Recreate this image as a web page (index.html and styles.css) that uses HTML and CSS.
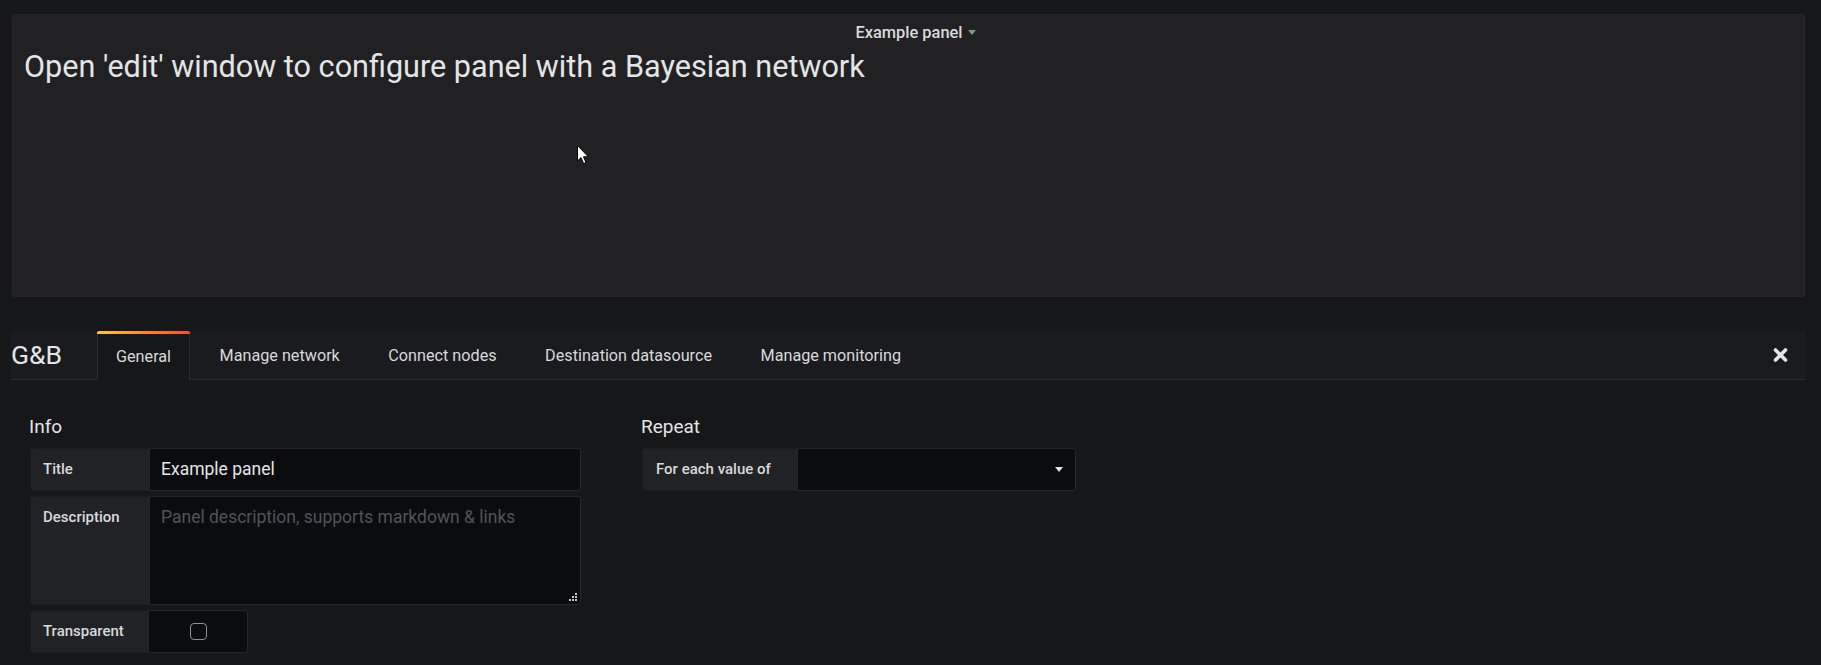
FILE: index.html
```html
<!DOCTYPE html>
<html lang="en">
<head>
<meta charset="utf-8">
<title>G&amp;B panel editor</title>
<link rel="stylesheet" href="styles.css">
</head>
<body>
<section class="panel">
  <header class="panel-header">
    <span class="panel-title">Example panel</span>
    <span class="panel-caret"></span>
  </header>
  <div class="panel-body">
    <p class="panel-text">Open 'edit' window to configure panel with a Bayesian network</p>
  </div>
</section>

<nav class="edit-tabs">
  <span class="brand">G&amp;B</span>
  <ul class="tab-list">
    <li class="tab tab-active">General</li>
    <li class="tab">Manage network</li>
    <li class="tab">Connect nodes</li>
    <li class="tab">Destination datasource</li>
    <li class="tab">Manage monitoring</li>
  </ul>
  <span class="tab-close">
    <svg width="15" height="14" viewBox="0 0 15 14"><path d="M2.5 2 L12.5 12 M12.5 2 L2.5 12" stroke="#e4e5e6" stroke-width="3.6" stroke-linecap="round"/></svg>
  </span>
</nav>

<main class="edit-content">
  <div class="section section-info">
    <h3 class="section-heading">Info</h3>
    <div class="form-row">
      <span class="form-label label-std">Title</span>
      <div class="form-input input-wide">Example panel</div>
    </div>
    <div class="form-row row-tall">
      <span class="form-label label-std">Description</span>
      <div class="form-input input-wide textarea">
        <span class="placeholder">Panel description, supports markdown &amp; links</span>
        <svg class="resize" width="10" height="10" viewBox="0 0 10 10"><g fill="#c8c9ca"><rect x="7" y="1" width="2" height="2"/><rect x="4" y="4" width="2" height="2"/><rect x="7" y="4" width="2" height="2"/><rect x="1" y="7" width="2" height="2"/><rect x="4" y="7" width="2" height="2"/><rect x="7" y="7" width="2" height="2"/></g></svg>
      </div>
    </div>
    <div class="form-row">
      <span class="form-label label-transparent">Transparent</span>
      <div class="form-input input-check"><span class="checkbox"></span></div>
    </div>
  </div>

  <div class="section section-repeat">
    <h3 class="section-heading">Repeat</h3>
    <div class="form-row">
      <span class="form-label label-repeat">For each value of</span>
      <div class="form-input input-select"><span class="select-caret"></span></div>
    </div>
  </div>
</main>

<svg class="cursor" width="13" height="20" viewBox="0 0 13 20"><path d="M0.5 0.5 L0.5 16 L4 12.6 L6.6 18.6 L9 17.6 L6.5 11.8 L11.3 11.8 Z" fill="#ffffff" stroke="#000000" stroke-width="1"/></svg>
</body>
</html>
```

FILE: styles.css
```css
html, body {
  margin: 0;
  padding: 0;
}
body {
  background: #161719;
  font-family: Roboto, "Liberation Sans", sans-serif;
  color: #d8d9da;
  width: 1821px;
  height: 665px;
  overflow: hidden;
  position: relative;
}

.panel {
  margin: 14px 16px 0 12px;
  height: 283px;
  box-sizing: border-box;
  background: #212124;
  border: 1px solid #27272a;
  border-radius: 3px;
}
.panel-header {
  height: 34px;
  display: flex;
  align-items: center;
  justify-content: center;
  gap: 5px;
  padding-left: 14px;
}
.panel-title {
  font-size: 16.4px;
  font-weight: 500;
  color: #d8d9da;
}
.panel-caret {
  width: 0;
  height: 0;
  border-left: 4.5px solid transparent;
  border-right: 4.5px solid transparent;
  border-top: 5px solid #8e8e8e;
  margin-top: 1px;
}
.panel-body {
  padding: 0 11px;
}
.panel-text {
  margin: 0;
  font-size: 30.6px;
  line-height: 36px;
  color: #e4e5e6;
}

.edit-tabs {
  margin: 34px 15px 0 11px;
  height: 49px;
  box-sizing: border-box;
  background: #1a1b1e;
  border-bottom: 1px solid #2c2c2f;
  display: flex;
  align-items: stretch;
}
.brand {
  width: 86px;
  flex: none;
  font-size: 26.5px;
  line-height: 48px;
  color: #e4e5e6;
}
.tab-list {
  list-style: none;
  margin: 0;
  padding: 0;
  display: flex;
  flex: 1;
}
.tab {
  padding: 0 18px;
  margin-right: 10.5px;
  border: 1px solid transparent;
  border-bottom: none;
  font-size: 16.2px;
  line-height: 47px;
  color: #d8d9da;
}
.tab-active {
  position: relative;
  background: #161719;
  border-color: #2c2c2f;
  height: 49px;
  box-sizing: border-box;
  border-top: 3px solid transparent;
  line-height: 45px;
}
.tab-active::before {
  content: "";
  position: absolute;
  left: -1px;
  right: -1px;
  top: -3px;
  height: 3px;
  border-radius: 2px 2px 0 0;
  background: linear-gradient(90deg, #ffc82e, #ff7c1c 60%, #f0522b);
}
.tab-close {
  flex: none;
  display: flex;
  align-items: center;
  padding-right: 18px;
}

.edit-content {
  display: flex;
  gap: 61px;
  padding: 35px 0 0 30px;
}
.section {
  display: flex;
  flex-direction: column;
  gap: 5px;
}
.section-info {
  width: 551px;
}
.section-heading {
  margin: 0 0 5px -1px;
  font-size: 19px;
  font-weight: 400;
  line-height: 23px;
  color: #e4e5e6;
}
.form-row {
  display: flex;
  height: 43px;
}
.row-tall {
  height: 109px;
}
.form-label {
  flex: none;
  box-sizing: border-box;
  padding-left: 12px;
  background: #202226;
  border: 1px solid #1c1d21;
  border-right: none;
  border-radius: 3px 0 0 3px;
  font-size: 15px;
  font-weight: 500;
  line-height: 41px;
  color: #d8d9da;
}
.label-std { width: 119px; }
.label-transparent { width: 118px; }
.label-repeat { width: 155px; padding-left: 13px; }
.form-input {
  box-sizing: border-box;
  background: #0b0c0e;
  border: 1px solid #26272a;
  border-radius: 0 3px 3px 0;
  padding: 0 11px;
  font-size: 17.5px;
  line-height: 41px;
  color: #e4e5e6;
}
.input-wide { width: 432px; }
.textarea {
  position: relative;
}
.placeholder {
  font-size: 17.5px;
  color: #505459;
}
.resize {
  position: absolute;
  right: 2px;
  bottom: 2px;
}
.input-check {
  width: 100px;
  display: flex;
  align-items: center;
  justify-content: center;
  padding: 0;
}
.checkbox {
  width: 17px;
  height: 17px;
  box-sizing: border-box;
  border: 1.5px solid #909294;
  border-radius: 4px;
  margin-left: 1px;
}
.input-select {
  width: 279px;
  display: flex;
  align-items: center;
  justify-content: flex-end;
  padding-right: 12px;
}
.select-caret {
  width: 0;
  height: 0;
  border-left: 4.5px solid transparent;
  border-right: 4.5px solid transparent;
  border-top: 5px solid #e4e5e6;
}

.cursor {
  position: absolute;
  left: 577px;
  top: 145px;
}
```
